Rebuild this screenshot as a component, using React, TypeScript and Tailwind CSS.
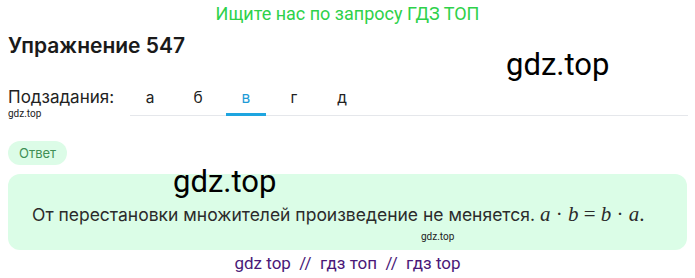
import React from 'react';

const tabs = ['а', 'б', 'в', 'г', 'д'];

const App: React.FC = () => {
  return (
    <div className="relative w-[695px] h-[278px] bg-white overflow-hidden font-['Inter',sans-serif]">
      <div className="h-[26px] flex items-center justify-center text-[18px] text-[#2ed14a] font-['Roboto',sans-serif]">
        Ищите нас по запросу ГДЗ ТОП
      </div>

      <h1 className="px-2 mt-[6px] text-[21px] leading-[28px] font-semibold text-[#1a1a1a]">Упражнение 547</h1>

      <div className="absolute left-[506px] top-[42px] text-[31px] text-black font-['Roboto',sans-serif]">gdz.top</div>

      <div className="flex items-start mt-[26px] px-2">
        <div className="w-[122px]">
          <div className="text-[17px] leading-[22px] text-[#222]">Подзадания:</div>
          <div className="text-[10px] leading-[12px] text-[#222] font-['Roboto',sans-serif]">gdz.top</div>
        </div>
        <div className="flex-1 flex gap-2 h-[30px] border-b border-[#e5e7eb] mr-[-1px]">
          {tabs.map((t, i) => (
            <div
              key={t}
              className={
                i === 2
                  ? 'w-10 h-[30px] pb-[4px] flex items-center justify-center text-[15.5px] text-[#1e9bd7] border-b-[3px] border-[#1ea5e0]'
                  : 'w-10 h-[30px] pb-[7px] flex items-center justify-center text-[15.5px] text-[#222]'
              }
            >
              {t}
            </div>
          ))}
        </div>
      </div>

      <div className="px-2 mt-[20px]">
        <span className="inline-block rounded-full bg-[#dcfce7] px-[11px] h-[24px] leading-[24px] text-[13px] text-[#3f8f55]">
          Ответ
        </span>
      </div>

      <div className="relative mx-2 mt-[9px] h-[76px] rounded-xl bg-[#dbfde7] px-6 pt-[28px]">
        <p className="text-[17.5px] leading-[24px] text-[#2b2b2b]">
          От перестановки множителей произведение не меняется.{' '}
          <span className="font-['Liberation_Serif',serif] text-[21px]">
            <i>a</i> · <i>b</i> = <i>b</i> · <i>a</i>.
          </span>
        </p>
        <div className="absolute left-[413px] top-[55px] text-[10px] text-[#222] font-['Roboto',sans-serif]">gdz.top</div>
      </div>

      <div className="absolute left-[173px] top-[159px] text-[31px] text-black font-['Roboto',sans-serif]">gdz.top</div>

      <div className="text-center text-[17px] leading-[26px] text-[#4a1878] font-['Roboto',sans-serif]">
        gdz top &nbsp;//&nbsp; гдз топ &nbsp;//&nbsp; гдз top
      </div>
    </div>
  );
};

export default App;
